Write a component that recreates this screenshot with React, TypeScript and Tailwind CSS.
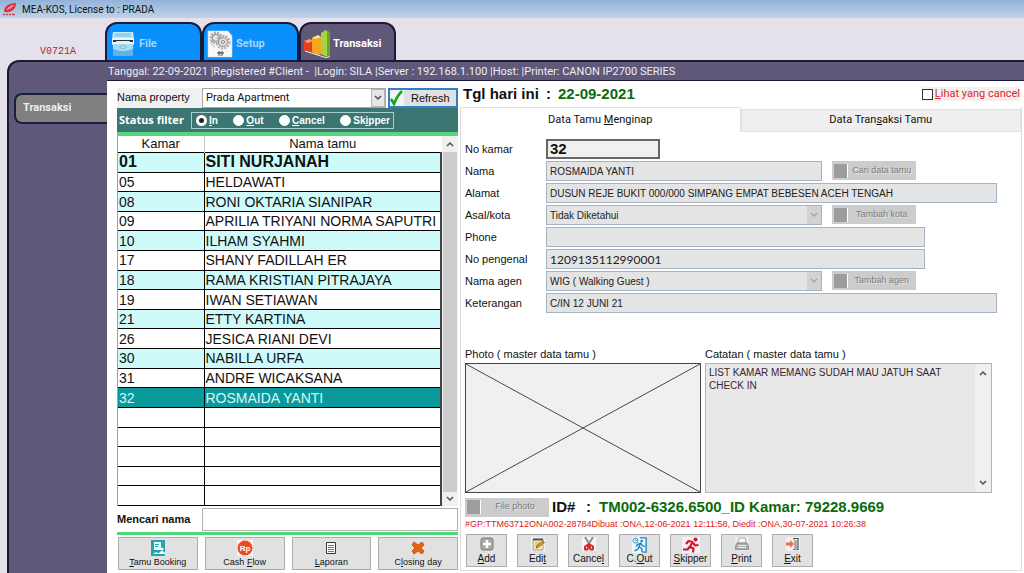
import { useState, type ReactNode } from "react";
import { clsx } from "clsx";

const GUESTS = [
  ["01", "SITI NURJANAH"],
  ["05", "HELDAWATI"],
  ["08", "RONI OKTARIA SIANIPAR"],
  ["09", "APRILIA TRIYANI NORMA SAPUTRI"],
  ["10", "ILHAM SYAHMI"],
  ["17", "SHANY FADILLAH ER"],
  ["18", "RAMA KRISTIAN PITRAJAYA"],
  ["19", "IWAN SETIAWAN"],
  ["21", "ETTY KARTINA"],
  ["26", "JESICA RIANI DEVI"],
  ["30", "NABILLA URFA"],
  ["31", "ANDRE WICAKSANA"],
  ["32", "ROSMAIDA YANTI"],
] as const;

const EMPTY_ROWS = 5;
const STATUSES = ["&In", "&Out", "&Cancel", "Sk&ipper"];

/* "&" marks the accelerator letter, as in a Windows menu resource */
function Accel({ text }: { text: string }) {
  const at = text.indexOf("&");
  if (at < 0) return <>{text}</>;
  return (
    <span>
      {text.slice(0, at)}
      <u>{text[at + 1]}</u>
      {text.slice(at + 2)}
    </span>
  );
}

function Chevron({ up = false, className = "text-[#505050]" }: { up?: boolean; className?: string }) {
  return (
    <svg viewBox="0 0 8 6" className={clsx("h-1.5 w-2", className)} aria-hidden="true">
      <path d={up ? "M1 5 4 2l3 3" : "M1 1l3 3 3-3"} fill="none" stroke="currentColor" strokeWidth="1.5" />
    </svg>
  );
}

/* ---------- icons ---------- */

function BrandIcon() {
  return (
    <svg viewBox="0 0 16 14" className="h-3.5 w-4" aria-hidden="true">
      <path d="M2 9C2 5 6 1 14 1c0 4-2 8-7 9-2 .3-5 .2-5-1z" fill="#d8343f" />
      <path d="M4 8c3-4 6-5 8-5-2 3-4 4-8 5z" fill="#e9a0a8" />
      <path d="M1 12.500h2m1 0h2m1 0h2m1 0h3" stroke="#cc4450" strokeWidth="1.600" />
    </svg>
  );
}

function DrawerIcon() {
  return (
    <svg viewBox="0 0 24 25" className="h-[25px] w-6" aria-hidden="true">
      <path d="M2 0h20l1 8H1z" fill="#c9ecfa" />
      <path d="M4 1h16l1 4H3z" fill="#8fd2f2" />
      <rect x="1" y="6" width="22" height="7" rx="1" fill="#eaf8fd" />
      <path d="M2 8h20v2H2z" fill="#26323c" />
      <path d="M5 9h14l-1 3H6z" fill="#e8eef0" />
      <path d="M2 12h20v11q0 1-1 1H3q-1 0-1-1z" fill="#5fb4e4" />
      <path d="M2 12h20v5q-10 4-20 0z" fill="#a6dcf5" />
      <rect x="9" y="14" width="6" height="2" rx="1" fill="#fff" stroke="#3f8fc0" strokeWidth=".7" />
    </svg>
  );
}

function GearPageIcon() {
  return (
    <svg viewBox="0 0 26 28" className="h-7 w-[26px]" aria-hidden="true">
      <path d="M1 1h20l4 5v21H1z" fill="#f9f9f9" stroke="#d4d4d4" strokeWidth=".6" />
      <circle cx="9" cy="8" r="5" fill="none" stroke="#aaa" strokeWidth="3" strokeDasharray="2 1" />
      <circle cx="9" cy="8" r="3.500" fill="#e8e8e8" stroke="#888" />
      <circle cx="16" cy="12" r="6" fill="none" stroke="#b4b4b4" strokeWidth="3" strokeDasharray="2 1" />
      <circle cx="16" cy="12" r="4.500" fill="#ddd" stroke="#999" />
      <circle cx="16" cy="12" r="1.500" fill="#fff" stroke="#888" />
      <path d="M4 14l4 3M6 11l-3 2" stroke="#aaa" />
      <circle cx="12" cy="23" r="1.200" fill="none" stroke="#333" />
      <circle cx="15" cy="23" r="1.200" fill="none" stroke="#333" />
      <path d="M11 25.500h5" stroke="#888" strokeWidth=".7" />
    </svg>
  );
}

function BarsIcon() {
  return (
    <svg viewBox="0 0 28 28" className="h-7 w-7" aria-hidden="true">
      <path d="M1 11l6-2 3 2v11l-3 1-6-3z" fill="#e2401f" />
      <path d="M1 11l6-2 3 2-5 2z" fill="#ff9a6e" />
      <path d="M9 8l6-3 3 2v17l-4 1-5-3z" fill="#f5a71c" />
      <path d="M9 8l6-3 3 2-5 2z" fill="#ffe08a" />
      <path d="M18 3l5-3 4 2v23l-3 2-6-3z" fill="#6aa81e" />
      <path d="M18 3l5-3 1 2v25l-6-3z" fill="#a4d444" />
      <path d="M2 21l22 7 3-2" fill="none" stroke="#eee" strokeWidth="1" />
    </svg>
  );
}

function BookingIcon() {
  return (
    <svg viewBox="0 0 16 16" className="size-4" aria-hidden="true">
      <path d="M1 0h14v16H1z" fill="#23a5ad" />
      <path d="M4 2h7v8H4z" fill="#e9fbfb" />
      <path d="M5 4h4v1H5zm0 2h3v1H5z" fill="#23a5ad" />
      <circle cx="12" cy="9" r="1.500" fill="#fff" />
      <path d="M3 14q3-3 5-1h7v1z" fill="#fff" />
      <path d="M9 13q3-4 6 0z" fill="#fff" />
    </svg>
  );
}

function RupiahIcon() {
  return (
    <svg viewBox="0 0 16 16" className="size-4" aria-hidden="true">
      <rect width="16" height="16" fill="#f6f3f2" />
      <circle cx="8" cy="8" r="7.500" fill="#f04a1c" />
      <text x="8" y="11" textAnchor="middle" fontSize="8" fontWeight="700" fontFamily="Liberation Sans, sans-serif" fill="#fff">
        Rp
      </text>
    </svg>
  );
}

function ReportIcon() {
  return (
    <svg viewBox="0 0 14 16" className="h-4 w-3.5" aria-hidden="true">
      <path d="M2.500 2.500h9v11h-9z" fill="#fafafa" stroke="#3a3a3a" />
      <path d="M4 5.500h6M4 7.500h6M4 9.500h6M4 11.500h6" stroke="#777" />
    </svg>
  );
}

function CrossIcon() {
  return (
    <svg viewBox="0 0 16 16" className="size-4" aria-hidden="true">
      <path d="M4 2l4 3 4-3 2 3-3 3 3 3-2 3-4-3-4 3-2-3 3-3-3-3z" fill="#e8650f" stroke="#b9480a" strokeWidth=".8" strokeLinejoin="round" />
    </svg>
  );
}

function AddIcon() {
  return (
    <svg viewBox="0 0 14 14" className="size-3.5" aria-hidden="true">
      <rect x="1" y="1" width="12" height="12" rx="2" fill="#a8a8a8" stroke="#7e7e7e" />
      <path d="M7 3v8M3 7h8" stroke="#fff" strokeWidth="2.500" />
    </svg>
  );
}

function EditIcon() {
  return (
    <svg viewBox="0 0 14 14" className="size-3.5" aria-hidden="true">
      <rect width="14" height="14" fill="#f3f3f0" />
      <path d="M2 2h10v11H2z" fill="#fbe8a6" stroke="#8f8a7a" strokeWidth=".8" />
      <path d="M2 1.500h10v2H2z" fill="#55585e" />
      <path d="M4 6h5M4 8h3" stroke="#b69b50" strokeWidth=".8" />
      <path d="M5 11l1-2.500L12 4l1.500 1.500L7.500 10z" fill="#e0a32a" stroke="#5d4a25" strokeWidth=".7" />
    </svg>
  );
}

function ScissorsIcon() {
  return (
    <svg viewBox="0 0 14 14" className="size-3.5" aria-hidden="true">
      <rect width="14" height="14" fill="#f4f4f4" />
      <path d="M3 0l5 8M11 0L6 8" stroke="#8a8f94" strokeWidth="2" />
      <path d="M7 7L3 9.500v3h2.500zM7 7l4 2.500v3H8.500z" fill="none" stroke="#d32a2a" strokeWidth="2" strokeLinejoin="round" />
    </svg>
  );
}

function CheckOutIcon() {
  return (
    <svg viewBox="0 0 17 18" className="h-[18px] w-[17px]" aria-hidden="true">
      <rect width="17" height="18" fill="#f1f7fb" />
      <path d="M9 1h7v16h-4" fill="none" stroke="#1b84bf" strokeWidth="1.500" />
      <circle cx="4" cy="4" r="2.800" fill="none" stroke="#1b84bf" />
      <path d="M4 2.500V4h1.500" fill="none" stroke="#1b84bf" strokeWidth=".8" />
      <circle cx="11" cy="4.500" r="1.500" fill="#1b84bf" />
      <path d="M10 6.500L8 11l3 2 .5 4M8 11l-1.500 3L3 15.500M10 7L6 8.500 5 11M10 7l2 3 3 .5" fill="none" stroke="#1b84bf" strokeWidth="1.600" />
    </svg>
  );
}

function RunnerIcon() {
  return (
    <svg viewBox="0 0 18 16" className="h-4 w-[18px]" aria-hidden="true">
      <rect width="18" height="16" fill="#f4f1f2" />
      <circle cx="13.500" cy="2.500" r="2" fill="#d0142c" />
      <path d="M10.500 5L8 10l3.500 1.500L11 15.500M8 9.500L5.500 12.500H1M11 5L6.500 4 4 7M11 5.500l2 3 3.500-.5" fill="none" stroke="#d0142c" strokeWidth="2.200" strokeLinejoin="round" />
    </svg>
  );
}

function PrinterIcon() {
  return (
    <svg viewBox="0 0 14 14" className="size-3.5" aria-hidden="true">
      <rect width="14" height="14" fill="#ededed" />
      <path d="M4 1h6l1 5H3z" fill="#fafafa" stroke="#999" strokeWidth=".8" />
      <path d="M2 6h10l1.500 3v3.500H.5V9z" fill="#adadad" stroke="#858585" strokeWidth=".8" />
      <path d="M3 8.500h8M3 10.500h8" stroke="#f0f0f0" />
    </svg>
  );
}

function ExitIcon() {
  return (
    <svg viewBox="0 0 14 14" className="size-3.5" aria-hidden="true">
      <rect width="14" height="14" fill="#f1f1f1" />
      <path d="M7 1.500h5v11H7" fill="none" stroke="#555" strokeWidth="1.200" />
      <path d="M8 2l3 2v10l-3-2z" fill="#a9acb0" />
      <path d="M0 5.500h4V3l4 4-4 4V8.500H0z" fill="#e8734c" />
    </svg>
  );
}

/* ---------- parts ---------- */

const TABS = [
  { label: "File", icon: <DrawerIcon /> },
  { label: "Setup", icon: <GearPageIcon /> },
  { label: "Transaksi", icon: <BarsIcon /> },
];

function TopTabs() {
  const active = "Transaksi";
  return (
    <nav className="flex items-end">
      {TABS.map(({ label, icon }) => (
        <button
          key={label}
          type="button"
          className={clsx(
            "flex h-[38px] w-[97px] items-center gap-0.5 rounded-t-xl border-2 border-b-0 border-[#1c1838] pl-0.5 pt-1 font-[Roboto,sans-serif] text-[11px] font-bold",
            label === active ? "bg-[#5f5878] text-white" : "bg-[#0a90fc] text-[#a9d4f7]",
          )}
        >
          <span className="flex w-7 justify-center">{icon}</span>
          {label}
        </button>
      ))}
    </nav>
  );
}

function GuestTable() {
  return (
    <div className="flex h-[370px] border-l border-[#a0a0a0]">
      <table className="h-full flex-1 table-fixed border-collapse text-left text-sm leading-[18px]">
        <thead>
          <tr className="h-4 text-[13px] leading-4">
            <th className="w-[86px] border-r border-[#c8c8c8] p-0 text-center font-normal">Kamar</th>
            <th className="p-0 text-center font-normal">Nama tamu</th>
          </tr>
        </thead>
        <tbody>
          {GUESTS.map(([room, name], i) => (
            <tr
              key={room}
              className={clsx(
                "border-y border-black",
                room === "32" ? "bg-[#0b999b] text-[#d8f8f8]" : i % 2 === 0 ? "bg-[#cffafa]" : "bg-white",
                i === 0 && "text-base font-bold leading-[18px]",
              )}
            >
              <td className="border-r border-black py-0 pl-px pr-0">{room}</td>
              <td className="whitespace-nowrap border-r-2 border-[#444] py-0 pl-px pr-0">{name}</td>
            </tr>
          ))}
          {Array.from({ length: EMPTY_ROWS }, (_, i) => (
            <tr key={i} className="border-y border-black">
              <td className="border-r border-black p-0">&nbsp;</td>
              <td className="border-r-2 border-[#444] p-0" />
            </tr>
          ))}
        </tbody>
      </table>
      <div className="flex w-4 flex-col items-center bg-[#f0f0f0]" aria-hidden="true">
        <span className="flex h-4 items-center"><Chevron up /></span>
        <span className="w-3.5 flex-1 bg-[#cdcdcd]" />
        <span className="flex h-3.5 items-center"><Chevron /></span>
      </div>
    </div>
  );
}

function ActionButton({ label, icon, className }: { label: string; icon: ReactNode; className: string }) {
  return (
    <button
      type="button"
      className={clsx(
        "flex h-[33px] flex-col items-center justify-between border border-[#adadad] bg-[#e1e1e1] pb-px pt-0.5 leading-3",
        className,
      )}
    >
      {icon}
      <Accel text={label} />
    </button>
  );
}

const LEFT_ACTIONS = [
  { label: "&Tamu Booking", icon: <BookingIcon /> },
  { label: "Cash &Flow", icon: <RupiahIcon /> },
  { label: "&Laporan", icon: <ReportIcon /> },
  { label: "C&losing day", icon: <CrossIcon /> },
];

const RECORD_ACTIONS = [
  { label: "&Add", icon: <AddIcon /> },
  { label: "Edi&t", icon: <EditIcon /> },
  { label: "Cance&l", icon: <ScissorsIcon /> },
  { label: "C.&Out", icon: <CheckOutIcon /> },
  { label: "&Skipper", icon: <RunnerIcon /> },
  { label: "&Print", icon: <PrinterIcon /> },
  { label: "&Exit", icon: <ExitIcon /> },
];

function GuestPanel() {
  const [status, setStatus] = useState(STATUSES[0]);

  return (
    <section className="w-[341px] shrink-0 pt-[7px]">
      <div className="flex h-5 items-stretch">
        <label htmlFor="property" className="w-[85px] bg-[#f0f0f0] leading-[19px]">
          Nama property
        </label>
        <div className="relative mr-0.5 flex-1">
          <select
            id="property"
            className="h-full w-full appearance-none border border-[#a8a8a8] bg-white pl-[3px] font-[Roboto,sans-serif] text-[11px]"
          >
            <option>Prada Apartment</option>
          </select>
          <span className="pointer-events-none absolute inset-y-px right-px flex w-3.5 items-center justify-center border border-[#b5b5b5] bg-[#e6e6e6]">
            <Chevron />
          </span>
        </div>
        <button type="button" className="flex w-[70px] items-center gap-[7px] border-2 border-[#2f80c8] bg-[#e1e1e1]">
          <svg viewBox="0 0 14 16" className="h-4 w-3.5 bg-[#f4f4f4]" aria-hidden="true">
            <path d="M1 9l3 5q3-8 8-13" fill="none" stroke="#12a81c" strokeWidth="2.500" />
          </svg>
          Refresh
        </button>
      </div>

      <div role="radiogroup" aria-labelledby="status-label" className="flex h-6 items-center bg-[#3b7673] pl-0.5 text-white">
        <span id="status-label" className="w-[72px] font-['Noto_Sans',sans-serif] text-[11px] font-bold">
          Status filter
        </span>
        <div className="flex h-[17px] w-[203px] items-center justify-between border border-[#a9cfcc] pl-1 pr-[3px]">
          {STATUSES.map((s) => (
            <label key={s} className="flex items-center gap-0.5 text-[10px] font-bold">
              <input
                type="radio"
                name="status"
                checked={status === s}
                onChange={() => setStatus(s)}
                className="size-[11px] appearance-none rounded-full border border-white bg-white checked:border-[3px] checked:bg-[#222]"
              />
              <Accel text={s} />
            </label>
          ))}
        </div>
      </div>
      <div className="h-1 bg-[#58d47c]" />

      <GuestTable />

      <div className="flex h-[26px] items-center">
        <label htmlFor="search" className="w-[85px] text-[11px] font-bold">Mencari nama</label>
        <input id="search" type="text" className="h-[23px] min-w-0 flex-1 border border-[#b0b0b0] bg-white px-1" />
      </div>
      <div className="h-[3px] bg-[#4fd878]" />
      <div className="mt-0.5 flex gap-[7px] pl-px text-[9px]">
        {LEFT_ACTIONS.map((a) => (
          <ActionButton key={a.label} {...a} className="flex-1" />
        ))}
      </div>
    </section>
  );
}

function DisabledButton({ label }: { label: string }) {
  return (
    <button
      type="button"
      disabled
      className="flex h-[19px] w-[84px] shrink-0 items-center bg-[#cccccc] pl-0.5 text-[9px] font-normal text-[#7c7c7c] [text-shadow:1px_1px_0_#e4e4e4]"
    >
      <span className="size-3.5 border-r border-white bg-[#9d9d9d]" />
      <span className="flex-1">{label}</span>
    </button>
  );
}

const FIELD = "h-5 min-w-0 border border-[#a3b3c3] bg-[#e4e4e4] px-[3px] text-[#222]";

function Row({ id, label, children }: { id: string; label: string; children: ReactNode }) {
  return (
    <div className="flex h-5 items-center">
      <label htmlFor={id} className="w-[81px] shrink-0">{label}</label>
      <div className="flex flex-1 items-center">{children}</div>
    </div>
  );
}

function LockedSelect({ id, value }: { id: string; value: string }) {
  return (
    <div className="relative flex-1">
      <select id={id} disabled className={clsx(FIELD, "block w-full appearance-none text-[10px] opacity-100")}>
        <option>{value}</option>
      </select>
      <span className="pointer-events-none absolute inset-y-px right-px flex w-3.5 items-center justify-center bg-[#d2d2d2]">
        <Chevron className="text-[#a5a5a5]" />
      </span>
    </div>
  );
}

function GuestForm() {
  return (
    <form className="mt-[7px] flex flex-col gap-0.5 pr-6">
      <Row id="room" label="No kamar">
        <input id="room" readOnly defaultValue="32" className="h-5 w-[114px] border-2 border-[#666] bg-[#f0f0f0] px-0.5 text-[15px] font-bold" />
      </Row>
      <Row id="name" label="Nama">
        <div className="flex w-[82%] gap-2.5">
          <input id="name" readOnly defaultValue="ROSMAIDA YANTI" className={clsx(FIELD, "flex-1 text-[10px]")} />
          <DisabledButton label="Cari data tamu" />
        </div>
      </Row>
      <Row id="address" label="Alamat">
        <input id="address" readOnly defaultValue="DUSUN REJE BUKIT 000/000 SIMPANG EMPAT BEBESEN ACEH TENGAH" className={clsx(FIELD, "w-full text-[10px]")} />
      </Row>
      <Row id="city" label="Asal/kota">
        <div className="flex w-[82%] gap-2.5">
          <LockedSelect id="city" value="Tidak Diketahui" />
          <DisabledButton label="Tambah kota" />
        </div>
      </Row>
      <Row id="phone" label="Phone">
        <input id="phone" readOnly className={clsx(FIELD, "w-[84%] text-[12px]")} />
      </Row>
      <Row id="idcard" label="No pengenal">
        <input id="idcard" readOnly defaultValue="1209135112990001" className={clsx(FIELD, "w-[84%] font-[Lato,sans-serif] text-[12px]")} />
      </Row>
      <Row id="agent" label="Nama agen">
        <div className="flex w-[82%] gap-2.5">
          <LockedSelect id="agent" value="WIG ( Walking Guest )" />
          <DisabledButton label="Tambah agen" />
        </div>
      </Row>
      <Row id="note" label="Keterangan">
        <input id="note" readOnly defaultValue="C/IN 12 JUNI 21" className={clsx(FIELD, "w-full text-[10px]")} />
      </Row>
    </form>
  );
}

function DetailPanel() {
  return (
    <section className="min-w-0 flex-1">
      <header className="flex h-[26px] items-center justify-between pl-[3px] pr-1">
        <p className="flex text-[15px] font-bold">
          <span className="w-[83px]">Tgl hari ini</span>
          <span className="w-3">:</span>
          <span className="text-[#0b6b0b]">22-09-2021</span>
        </p>
        <label className="flex items-center gap-0.5 bg-[#f4f0f0] font-[Roboto,sans-serif] text-[11px] leading-[14px] text-[#e02525]">
          <input type="checkbox" className="size-[11px] appearance-none border border-[#333] bg-white checked:bg-[#333]" />
          <Accel text="&Lihat yang cancel" />
        </label>
      </header>

      <div className="mr-0.5 border-x border-b border-[#dcdcdc] pb-[3px]">
        <div role="tablist" className="flex h-[25px] items-end font-[Roboto,sans-serif] text-[11px]">
          <button type="button" role="tab" aria-selected="true" className="h-full flex-1 border-r border-t border-[#e2e2e2] bg-white">
            <Accel text="Data Tamu &Menginap" />
          </button>
          <button type="button" role="tab" aria-selected="false" className="h-[23px] flex-1 border border-[#e2e2e2] bg-[#efefef]">
            <Accel text="Data Tran&saksi Tamu" />
          </button>
        </div>

        <div className="pl-1">
          <GuestForm />

          <div className="mt-8 flex gap-1 pr-[29px]">
            <figure className="flex w-[236px] flex-col">
              <figcaption className="h-[18px] leading-[18px]">Photo ( master data tamu )</figcaption>
              <svg viewBox="0 0 236 130" preserveAspectRatio="none" className="h-[130px] w-full border border-[#444] bg-[#f0f0f0]" aria-label="No photo">
                <path d="M0 0l236 130M236 0L0 130" stroke="#444" strokeWidth="1" />
              </svg>
            </figure>
            <div className="flex flex-1 flex-col">
              <label htmlFor="remarks" className="h-[18px] leading-[18px]">Catatan ( master data tamu )</label>
              <div className="flex h-[130px] border border-[#b4b4b4] bg-[#e8e8e8]">
                <textarea
                  id="remarks"
                  readOnly
                  defaultValue={"LIST KAMAR MEMANG SUDAH MAU JATUH SAAT\nCHECK IN"}
                  className="flex-1 resize-none overflow-hidden bg-transparent py-0.5 pl-[3px] text-[10px] leading-[13px] text-[#3c2430]"
                />
                <div className="flex w-4 flex-col items-center justify-between bg-[#f0f0f0] py-1.5" aria-hidden="true">
                  <Chevron up />
                  <Chevron />
                </div>
              </div>
            </div>
          </div>

          <div className="mt-1 flex h-5 items-center text-[15px] font-bold">
            <DisabledButton label="File photo" />
            <span className="w-[37px] pl-[3px]">ID#</span>
            <span className="w-[13px]">:</span>
            <span className="whitespace-nowrap text-[#0b6b0b]">TM002-6326.6500_ID Kamar: 79228.9669</span>
          </div>
          <p className="whitespace-nowrap text-[9px] leading-[15px] text-[#e01818]">
            #GP:TTM63712ONA002-28784Dibuat :ONA,12-06-2021 12:11:58, Diedit :ONA,30-07-2021 10:26:38
          </p>
          <div className="mt-0.5 flex gap-2.5 pl-px text-[10px]">
            {RECORD_ACTIONS.map((a) => (
              <ActionButton key={a.label} {...a} className="w-[41px]" />
            ))}
          </div>
        </div>
      </div>
    </section>
  );
}

export default function App() {
  return (
    <div className="flex min-h-screen flex-col bg-[#e4e1ea] font-['Liberation_Sans',Arial,sans-serif] text-[11px] text-[#111]">
      <header className="flex h-[18px] items-center gap-1 bg-linear-to-b from-[#93b3d9] to-[#bfd3ea] pl-0.5 font-[Roboto,sans-serif] text-[10px]">
        <BrandIcon />
        MEA-KOS, License to : PRADA
      </header>

      <div className="flex h-[42px] items-end">
        <span className="w-[105px] pl-10 font-['Liberation_Mono',monospace] text-[10px] leading-4 text-[#a22c44]">V0721A</span>
        <TopTabs />
      </div>

      <div className="ml-[7px] flex flex-1 rounded-tl-xl border-l-2 border-t-2 border-[#1c1838] bg-[#5f5878]">
        <aside className="w-[98px] shrink-0 pl-[5px] pt-[31px]">
          <button
            type="button"
            className="h-[31px] w-full rounded-l-lg border-2 border-r-0 border-[#16203c] bg-[#808080] pl-[7px] text-left font-[Roboto,sans-serif] text-[11px] font-bold text-[#eee]"
          >
            Transaksi
          </button>
        </aside>
        <div className="flex min-w-0 flex-1 flex-col">
          <p className="h-[18px] whitespace-pre pl-px font-[Roboto,sans-serif] leading-[19px] text-[#eeeef6]">
            {"Tanggal: 22-09-2021 |Registered #Client -  |Login: SILA |Server : 192.168.1.100 |Host: |Printer: CANON IP2700 SERIES"}
          </p>
          <main className="flex flex-1 gap-0.5 border-t border-[#1c1838] bg-white pl-2.5">
            <GuestPanel />
            <DetailPanel />
          </main>
        </div>
      </div>
    </div>
  );
}
